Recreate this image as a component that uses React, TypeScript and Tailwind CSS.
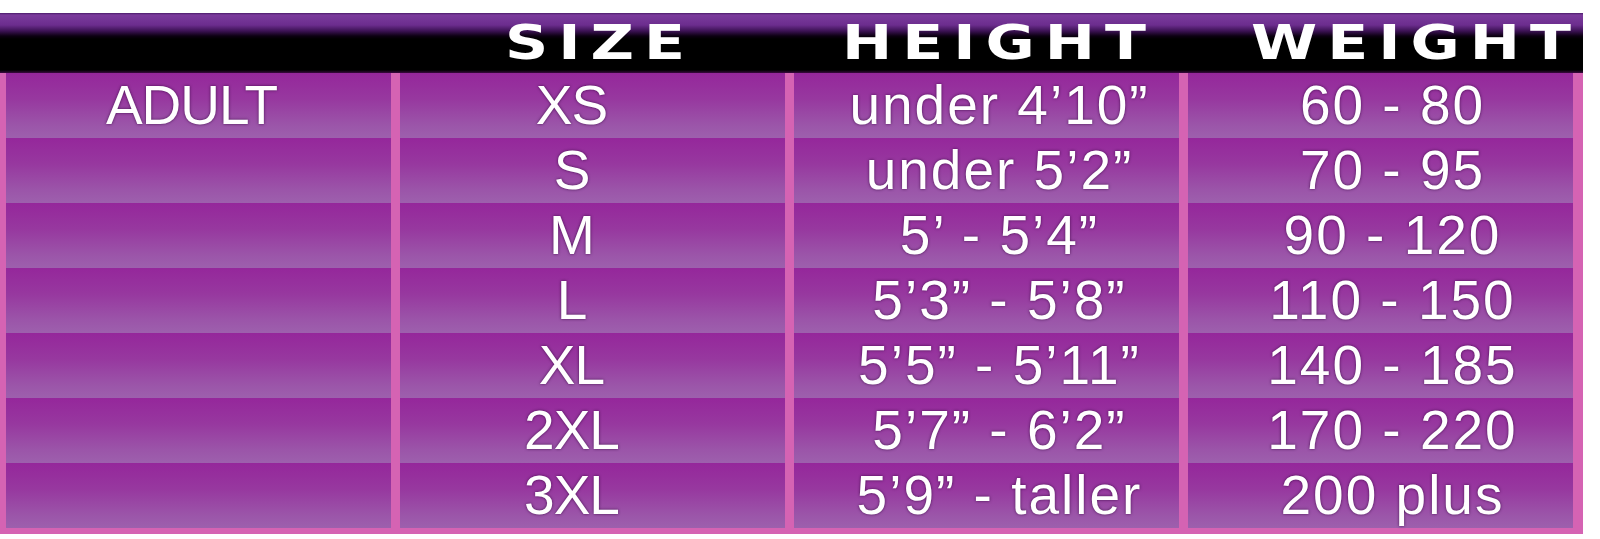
import React from 'react';

// size chart rows: [group, size, height, weight]
const rows: [string, string, string, string][] = [
  ['ADULT', 'XS', 'under 4’10”', '60 - 80'],
  ['', 'S', 'under 5’2”', '70 - 95'],
  ['', 'M', '5’ - 5’4”', '90 - 120'],
  ['', 'L', '5’3” - 5’8”', '110 - 150'],
  ['', 'XL', '5’5” - 5’11”', '140 - 185'],
  ['', '2XL', '5’7” - 6’2”', '170 - 220'],
  ['', '3XL', '5’9” - taller', '200 plus'],
];

const cellBg =
  'bg-[linear-gradient(to_bottom,#95279b_0%,#97389f_40%,#9b55a9_80%,#9d60ad_100%)]';
const txt =
  'text-white text-[55px] leading-none font-["Liberation_Sans",Arial,sans-serif] [text-shadow:0_0_3px_rgba(45,0,55,0.8)]';

const App: React.FC = () => {
  return (
    <div className="w-[1600px] h-[539px] bg-white pt-[13px]">
      <div className="w-[1583px]">
        {/* header band */}
        <div className="h-[60px] pl-[6px] pr-[10px] grid grid-cols-4 gap-x-[9px] bg-[linear-gradient(to_bottom,#4b1c6b_0px,#7b3b9c_2px,#6c2d8e_12px,#3c1254_18px,#0c0012_23px,#000_26px,#000_57px,#3a0a40_60px)]">
          <div />
          {[
            ['SIZE', 'pl-[105px]'],
            ['HEIGHT', 'pl-[48px]'],
            ['WEIGHT', 'pl-[63px]'],
          ].map(([label, pad]) => (
            <div key={label} className={`${pad} pt-[5px]`}>
              <span className="inline-block origin-left scale-x-[1.25] text-white text-[48px] leading-none font-bold tracking-[8px] font-['DejaVu_Sans',sans-serif]">
                {label}
              </span>
            </div>
          ))}
        </div>

        {/* body */}
        <div className="bg-[#d563b3] pl-[6px] pr-[10px] pb-[6px] grid grid-cols-4 gap-x-[9px] auto-rows-[65px]">
          {rows.map(([group, size, height, weight], i) => (
            <React.Fragment key={i}>
              <div className={`${cellBg} flex items-center justify-center pr-[14px] ${txt} tracking-[-1px]`}>{group}</div>
              <div className={`${cellBg} flex items-center justify-center pr-[42px] ${txt} tracking-[-1px]`}>{size}</div>
              <div className={`${cellBg} flex items-center justify-center pl-[26px] ${txt} tracking-[2px]`}>{height}</div>
              <div className={`${cellBg} flex items-center justify-center pl-[24px] ${txt} tracking-[2px]`}>{weight}</div>
            </React.Fragment>
          ))}
        </div>
      </div>
    </div>
  );
};

export default App;
